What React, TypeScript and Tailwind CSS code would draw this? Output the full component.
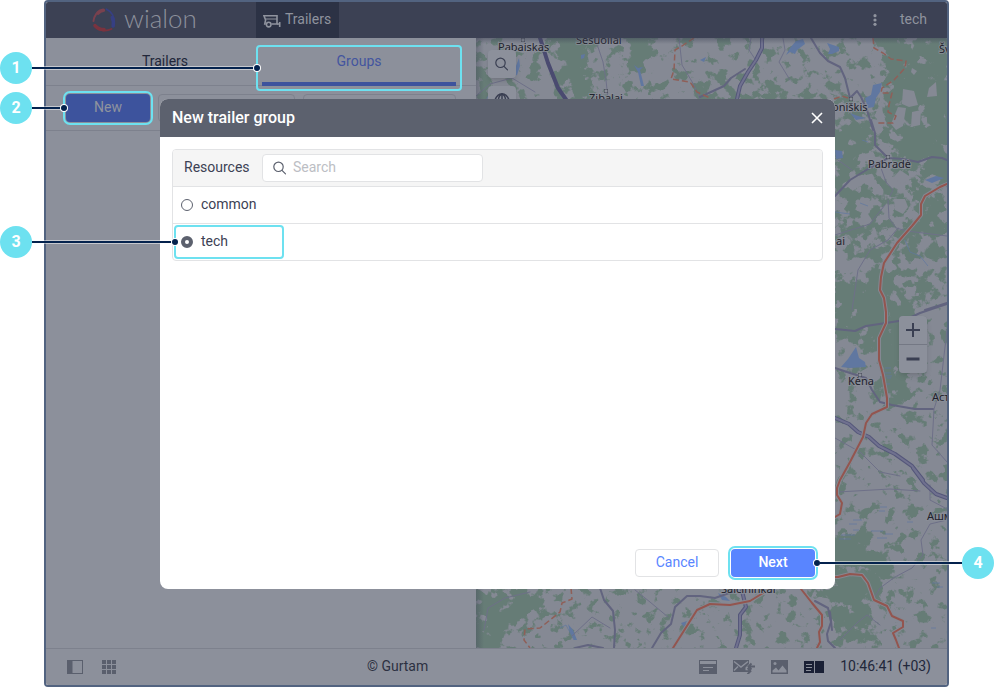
import React from "react";

const towns = [
  { name: "Pabaiskas", x: 498, y: 51, dot: [523, 40] },
  { name: "Šešuoliai", x: 576, y: 44 },
  { name: "Zibalai", x: 589, y: 102, dot: [606, 91] },
  { name: "Šv", x: 939, y: 53 },
  { name: "Joniškis", x: 829, y: 111, dot: [851, 99] },
  { name: "Pabradė", x: 868, y: 168, dot: [888, 157] },
  { name: "ai", x: 836, y: 245 },
  { name: "Kėna", x: 848, y: 385, dot: [860, 375] },
  { name: "Аст", x: 932, y: 401 },
  { name: "Ашм", x: 927, y: 520 },
  { name: "Šalčininkai", x: 721, y: 593 },
];

const lakes = [
  "786,55 790,48 796,41 803,39 805,44 797,50 795,54 790,52",
  "827,43 833,45 839,47 839,51 832,54 828,54 830,49",
  "873,85 882,83 880,92 876,98 874,107 868,108 865,98 871,95",
  "856,347 859,358 865,362 866,367 850,368 841,367 848,359",
  "519,58 520,66 517,75 514,76 516,66",
  "581,55 585,54 584,58 581,59",
  "634,65 638,68 643,67 640,70 644,86 641,86 638,72",
  "835,150 842,151 843,158 836,159",
  "850,113 858,116 866,118 856,120",
  "718,593 726,597 730,601 722,600",
  "568,624 573,630 577,640 574,640 570,632",
  "681,623 687,621 684,627",
  "700,60 706,57 704,62",
  "925,180 936,176 944,178 932,183",
];

const lanes = [
  "M595 38 L603 62 606 80 608 99",
  "M476 96 L490 84 512 78 535 92",
  "M679 38 L682 65 694 85 700 99",
  "M751 38 L749 50 757 62",
  "M783 38 L785 50 779 62 790 80",
  "M881 168 L886 182 893 190 890 196",
  "M888 200 L889 218 896 228 907 231 947 236",
  "M835 235 L870 224 885 205",
  "M898 228 L888 240 870 250 858 270 852 310",
  "M838 160 L852 170",
  "M835 438 L860 452 880 472 900 476",
  "M947 330 L940 390 934 409 932 445 947 462",
  "M838 492 L890 489 920 491",
  "M947 520 L930 524 921 540 923 555 912 568 895 577 880 588 874 598",
  "M484 630 L488 608 505 598 530 592",
  "M572 636 L592 617 610 628",
  "M635 590 L650 602 668 617",
  "M930 485 L930 500 947 509",
  "M840 640 L858 622 867 615 880 625",
];

const roads = [
  "M811 38 L820 53 828 61 840 67 845 78 850 98 M850 98 L857 91 861 97 867 110 873 130",
  "M700 97 L724 86 731 78 745 69",
  "M871 120 L875 133 875 145 888 158 903 159 918 162 932 157 942 158 947 160",
  "M835 196 L850 180 868 169 888 158",
  "M835 329 L855 331 866 326 886 323 905 320 920 313 947 304",
  "M835 368 L850 373 866 378 872 390 880 402 892 405 915 409 933 409",
  "M600 588 L604 600 613 611 615 630 614 648",
  "M652 648 L661 633 671 624 675 607 687 596 700 596 715 598 735 591",
  "M815 601 L828 608 831 622 827 634 828 641 835 648",
  "M575 648 L588 645 603 648",
  "M830 612 L832 630",
  "M925 310 L947 303",
];

const motorways = [
  "M762 38 L762 48 756 60 748 72 740 86 737 99",
  "M835 418 L849 424 858 432 869 437 879 446 895 454 912 466 923 480",
  "M913 468 L924 483 936 494 947 498",
  "M742 591 L746 607 740 615 740 635 736 648",
];

const highways = [
  "M947 184 L940 187 925 196 921 204 921 215 912 226 897 243 884 263 881 277 880 290 884 298 886 312 886 323 879 338 879 360 883 375 887 398 887 407 872 414 866 423 863 437 850 462 840 480 837 488 837 495 842 503 840 514 835 517",
  "M822 577 L838 577 850 574 862 575 868 583 874 600 887 606 892 616 903 621 903 627 893 633 896 640 899 648",
  "M801 589 L812 603 822 615 822 626 819 632 820 642 817 648",
  "M673 648 L697 610 710 604 730 605 750 601 763 593",
];

const borders = [
  "M694 38 L682 46 675 50 674 70 671 79 690 82 697 92 710 98",
  "M873 38 L874 48 883 53 891 59 906 61 905 68 894 80 882 88 881 93 892 93 889 105 888 112 896 116 893 123 878 123",
  "M834 99 L842 96 848 98",
  "M571 588 L572 599 562 603 560 612 550 620 540 628 525 629 524 640 530 648",
];

function MapView() {
  return (
    <svg
      className="absolute inset-0 h-full w-full"
      viewBox="476 38 471 610"
      preserveAspectRatio="xMidYMid slice"
      role="img"
      aria-label="Map"
    >
      <defs>
        <filter id="forest" filterUnits="userSpaceOnUse" x="476" y="38" width="471" height="610" colorInterpolationFilters="sRGB">
          <feGaussianBlur in="SourceGraphic" stdDeviation="4" result="density" />
          <feTurbulence type="fractalNoise" baseFrequency="0.085" numOctaves="4" seed="7" />
          <feColorMatrix values="0 0 0 0 0  0 0 0 0 0  0 0 0 0 0  1 0 0 0 0" result="noise" />
          <feComposite in="density" in2="noise" operator="arithmetic" k2="1" k3="1" k4="-0.5" />
          <feColorMatrix values="0 0 0 0 0.4  0 0 0 0 0.486  0 0 0 0 0.463  0 0 0 12 -4.5" />
        </filter>
        <linearGradient id="edge" x1="0" x2="1" y1="0" y2="0">
          <stop offset="0" stopColor="#3c4154" stopOpacity="0.35" />
          <stop offset="1" stopColor="#3c4154" stopOpacity="0" />
        </linearGradient>
        <linearGradient id="edgeTop" x1="0" x2="0" y1="0" y2="1">
          <stop offset="0" stopColor="#3c4154" stopOpacity="0.45" />
          <stop offset="1" stopColor="#3c4154" stopOpacity="0" />
        </linearGradient>
      </defs>
      <rect x="476" y="38" width="471" height="610" fill="#858994" />
      <g filter="url(#forest)">
        <rect x="440" y="0" width="540" height="690" fillOpacity="0.3" />
        <g fillOpacity="0.45">
          <polygon points="552,30 590,30 588,70 596,105 572,105 560,70" />
          <polygon points="625,30 645,30 652,55 635,75 625,70" />
          <polygon points="880,30 950,30 950,185 900,150 890,120 885,80" />
          <polygon points="835,115 870,115 868,150 850,180 835,190" />
          <polygon points="870,300 910,295 922,320 910,360 915,400 888,405 880,370" />
          <polygon points="835,290 885,270 880,360 868,345 835,325" />
          <polygon points="830,530 870,540 895,570 870,610 872,640 850,640 830,620" />
          <polygon points="476,598 520,588 545,590 540,615 505,625 500,655 476,655" />
          <polygon points="476,50 490,65 485,100 476,100" />
        </g>
        <g fillOpacity="0.17">
          <polygon points="835,190 890,180 947,200 947,300 895,290 860,260 835,260" />
          <polygon points="900,200 947,190 947,240 905,240" />
          <polygon points="690,80 760,75 850,95 850,105 690,105" />
          <polygon points="870,125 947,150 947,200 890,180" />
        </g>
      </g>
      <g fill="#858994">
        <polygon points="903,89 914,91 918,105 909,107 902,104" />
        <polygon points="898,107 906,108 903,126 896,130 891,124" />
        <polygon points="912,112 921,110 920,125 911,127" />
        <polygon points="929,88 936,82 937,96 927,97" />
        <polygon points="912,68 917,71 914,75 911,72" />
        <polygon points="894,199 905,199 908,207 903,214 895,210" />
        <polygon points="900,170 912,178 902,184 893,178" />
      </g>
      <g fill="#6077a0">
        {lakes.map((p) => (
          <polygon key={p} points={p} />
        ))}
      </g>
      <g stroke="#6077a0" strokeWidth="1" fill="none" opacity="0.7">
        <path d="M853 520h9m-13 4h8m-4 6h6m-18 5h14m-16 4h12m20-8h12m2 3h8m-16 4h10m20-16h6M880 507h7m-8 4h6M932 583h8m-3 4h6M931 628h5M885 368h6m-7 5h7m-4 5h4m-7 6h6M884 376h8" />
        <path d="M560 628 L566 625 574 640 M835 212 L850 214 M862 140l6 2 M860 203l8 3 M905 240l5 12 10 4 8 10 M486 100l8-14" />
      </g>
      <g fill="none" strokeLinejoin="round" strokeLinecap="round">
        <g stroke="#6e7088" strokeWidth="1">
          {lanes.map((d) => (
            <path key={d} d={d} />
          ))}
        </g>
        <g stroke="#62647f" strokeWidth="2">
          {roads.map((d) => (
            <path key={d} d={d} />
          ))}
        </g>
        <path d="M540 38 L548 63 558 88 567 101" stroke="#4a4a70" strokeWidth="4" />
        <g stroke="#55577a" strokeWidth="4">
          {motorways.map((d) => (
            <path key={d} d={d} />
          ))}
        </g>
        <g stroke="#70718f" strokeWidth="2">
          {motorways.map((d) => (
            <path key={d} d={d} />
          ))}
        </g>
        <g stroke="#858892" strokeWidth="4">
          {highways.map((d) => (
            <path key={d} d={d} />
          ))}
        </g>
        <g stroke="#93554f" strokeWidth="2">
          {highways.map((d) => (
            <path key={d} d={d} />
          ))}
        </g>
        <g stroke="#8f5f58" strokeWidth="1.5" strokeDasharray="6 3" strokeLinecap="butt">
          {borders.map((d) => (
            <path key={d} d={d} />
          ))}
        </g>
      </g>
      <g
        className="font-['Noto_Sans',sans-serif] text-[11px]"
        fill="#1f222c"
        stroke="#8b8f99"
        strokeWidth="2"
        strokeOpacity="0.8"
        paintOrder="stroke"
      >
        {towns.map((t) => (
          <React.Fragment key={t.name}>
            <text x={t.x} y={t.y}>
              {t.name}
            </text>
            {t.dot && (
              <rect x={t.dot[0] - 1.5} y={t.dot[1] - 1.5} width="3" height="3" fill="#8b8f99" stroke="#2f3342" strokeWidth="1" />
            )}
          </React.Fragment>
        ))}
      </g>
      <rect x="476" y="38" width="8" height="610" fill="url(#edge)" />
      <rect x="476" y="38" width="471" height="6" fill="url(#edgeTop)" />
    </svg>
  );
}

function SearchIcon({ className }: { className: string }) {
  return (
    <svg className={className} viewBox="0 0 14 14" fill="none" stroke="currentColor" strokeWidth="1.2" strokeLinecap="round">
      <circle cx="5.5" cy="5.8" r="4.700" />
      <path d="M9 9.300 L12.500 12.800" />
    </svg>
  );
}

function Callout({ n, className, flip }: { n: number; className: string; flip?: boolean }) {
  return (
    <div className={`pointer-events-none absolute z-30 flex items-center ${flip ? "flex-row-reverse" : ""} ${className}`}>
      <span className="flex size-8 shrink-0 items-center justify-center rounded-full bg-[#6de1f0] text-base font-bold text-white">
        {n}
      </span>
      <span className="h-1 flex-1 border-y border-white/50 bg-[#04224d] bg-clip-padding" />
      <span className="size-1.5 shrink-0 rounded-full bg-[#04224d] ring-1 ring-white" />
    </div>
  );
}

function Logo() {
  return (
    <div className="flex items-center gap-2">
      <svg className="size-6" viewBox="0 0 24 24" fill="none" strokeLinecap="round">
        <path d="M1.500 13 C2 8 5 3 10.500 2.400" stroke="#79414e" strokeWidth="2" />
        <path d="M6 5 C7.500 3.300 9 2.600 11.300 2.300" stroke="#79414e" strokeWidth="3.600" />
        <path d="M14.500 1.200 C19.500 3.500 22.900 9 22.300 16" stroke="#363f83" strokeWidth="1.800" />
        <path d="M20.300 9.500 C21.600 12.500 21.700 15.500 21.200 18" stroke="#363f83" strokeWidth="3.600" />
        <path d="M3 18.400 C7 23 14 23.600 19.500 21" stroke="#79333f" strokeWidth="1.800" />
        <path d="M3 17.600 C5.500 20.400 8.500 21.600 12 21.600" stroke="#79333f" strokeWidth="3.600" />
      </svg>
      <span className="pb-1 font-['Lato',sans-serif] text-[26px] leading-6 font-light text-[#8c909b]">wialon</span>
    </div>
  );
}

function Header() {
  return (
    <header className="flex h-9 items-stretch bg-[#3c4154] text-[#8f939e]">
      <div className="flex w-[210px] items-center pl-[46px]">
        <Logo />
      </div>
      <a href="#trailers" className="flex items-center gap-1 bg-[#2c3245] pr-2 pb-0.5 pl-[7px]">
        <svg className="mt-1 h-4 w-[18px]" viewBox="0 0 18 16" fill="none" stroke="currentColor" strokeWidth="1.600">
          <path d="M2.800 11 H1.800 L2.600 7 L1 2.800 H14 V11 H8.500" />
          <path d="M2.500 6 H14" strokeWidth="1" />
          <path d="M14 11 H17 M16.700 9 V14" />
          <circle cx="5.700" cy="11.600" r="2.300" />
        </svg>
        <span>Trailers</span>
      </a>
      <div className="ml-auto flex items-center pr-5">
        <button type="button" aria-label="More" className="flex h-9 w-6 items-center justify-center">
          <svg className="h-3 w-1" viewBox="0 0 4 12" fill="currentColor">
            <circle cx="2" cy="1.700" r="1.600" />
            <circle cx="2" cy="6" r="1.600" />
            <circle cx="2" cy="10.300" r="1.600" />
          </svg>
        </button>
        <button type="button" className="ml-[13px] pb-0.5">
          tech
        </button>
      </div>
    </header>
  );
}

function SidePanel() {
  return (
    <aside className="w-[430px] shrink-0 bg-[#8c909b]">
      <nav className="flex h-12 border-b border-[#7d818d] pr-5 pl-[22px]">
        <a href="#list" className="flex flex-1 justify-center pt-[13px] leading-5 text-[#22273a]">
          Trailers
        </a>
        <a href="#groups" className="relative flex flex-1 justify-center pt-[13px] leading-5 text-[#43559f]">
          Groups
          <span className="absolute inset-x-0 -bottom-px h-1 bg-[#3d539d]" />
          <span className="absolute inset-x-[-6px] top-[7px] -bottom-1.5 rounded border-2 border-[#6de1f0]" />
        </a>
      </nav>
      <div className="flex gap-2 border-b border-[#7d818d] px-5 py-2">
        <button
          type="button"
          className="h-7 w-[84px] rounded bg-[#3d539d] pb-0.5 text-[#8f939e] outline-2 outline-offset-1 outline-[#6de1f0]"
        >
          New
        </button>
        <input aria-label="Filter" className="h-7 w-[137px] rounded border border-[#7d818d]" />
        <input aria-label="Name" className="h-7 min-w-0 flex-1 rounded border border-[#7d818d]" />
      </div>
    </aside>
  );
}

const mapButton = "flex size-7 items-center justify-center bg-[#8c909b] text-[#3a3f52]";

function MapArea() {
  return (
    <main className="relative min-w-0 flex-1 overflow-hidden">
      <MapView />
      <div className="absolute top-3 left-3 flex flex-col gap-2">
        <button type="button" aria-label="Search on map" className={`${mapButton} rounded shadow-md`}>
          <SearchIcon className="size-3.5" />
        </button>
        <button type="button" aria-label="Layers" className={`${mapButton} rounded shadow-md`}>
          <svg className="size-4" viewBox="0 0 16 16" fill="none" stroke="currentColor" strokeWidth="1.500">
            <path d="M1 8 C4 -0.500 12 -0.500 15 8" />
            <path d="M4.500 7 C5.500 1 10.500 1 11.500 7" />
            <path d="M8 1.500v6M1 8h14" />
            <path d="M1 8 C4 16 12 16 15 8" />
          </svg>
        </button>
      </div>
      <div className="absolute top-[278px] right-5 flex flex-col gap-px overflow-hidden rounded bg-[#747884] shadow-md">
        <button type="button" aria-label="Zoom in" className={mapButton}>
          <svg className="size-3.5" viewBox="0 0 14 14" stroke="currentColor" strokeWidth="2">
            <path d="M7 0v14M0 7h14" />
          </svg>
        </button>
        <button type="button" aria-label="Zoom out" className={mapButton}>
          <svg className="size-3.5" viewBox="0 0 14 14" stroke="currentColor" strokeWidth="3">
            <path d="M0.500 7h13" />
          </svg>
        </button>
      </div>
    </main>
  );
}

function Footer() {
  return (
    <footer className="flex h-[37px] items-center border-t border-[#7d818d] bg-[#8c909b] pr-4 pl-[21px] text-[#5a5f6d]">
      <div className="flex items-center gap-[19px]">
        <button type="button" aria-label="Toggle panel">
          <svg className="h-3.5 w-4" viewBox="0 0 16 14" fill="currentColor">
            <path d="M0 0h16v14H0z M5.500 1v12H15V1z" fillRule="evenodd" />
          </svg>
        </button>
        <button type="button" aria-label="Applications">
          <svg className="size-3.5" viewBox="0 0 14 14" fill="currentColor">
            <path d="M0 0h4v4H0zM5 0h4v4H5zM10 0h4v4h-4zM0 5h4v4H0zM5 5h4v4H5zM10 5h4v4h-4zM0 10h4v4H0zM5 10h4v4H5zM10 10h4v4h-4z" />
          </svg>
        </button>
      </div>
      <p className="flex-1 pr-5 pb-0.5 text-center text-[#2c3142]">© Gurtam</p>
      <div className="flex items-center gap-4">
        <button type="button" aria-label="Events">
          <svg className="h-3.5 w-[18px]" viewBox="0 0 18 14" fill="none">
            <path d="M0 0h18v14H0z M1 1v3h16V1z" fill="currentColor" fillRule="evenodd" />
            <path d="M4 7.500h10M4 10.500h6" stroke="#8c909b" strokeWidth="1.200" />
          </svg>
        </button>
        <button type="button" aria-label="Messages">
          <svg className="h-3.5 w-[22px]" viewBox="0 0 22 14" fill="none">
            <path d="M0 0h16v4l-3.500 3.500V12H0z" fill="currentColor" />
            <path d="M1 1.500l7 5.500 7-5.500M1 10.500l4-4" stroke="#8c909b" strokeWidth="1.400" />
            <path d="M22 6.500h-6.500m3-3L15.500 6.500l3 3M11 11.200h6.500m-3-3l3 3-3 3" stroke="currentColor" strokeWidth="1.800" />
          </svg>
        </button>
        <button type="button" aria-label="Images">
          <svg className="h-3.5 w-[17px]" viewBox="0 0 17 14" fill="none">
            <path d="M0 0h17v14H0z" fill="currentColor" />
            <path d="M1.500 12.500v-2l3.500-3 2.500 3 4-5 4 5v2z" fill="#8c909b" />
            <circle cx="4" cy="3.500" r="1.500" fill="#8c909b" />
          </svg>
        </button>
        <button type="button" aria-label="Layout" className="text-[#1a2035]">
          <svg className="h-3 w-5" viewBox="0 0 20 12" fill="none">
            <path d="M0 0h10v12H0zM11 0h9v12h-9z" fill="currentColor" />
            <path d="M2 3.500h6M2 6.500h6M2 9.500h5" stroke="#8c909b" />
          </svg>
        </button>
        <time className="pb-0.5 text-[#22273a]">10:46:41 (+03)</time>
      </div>
    </footer>
  );
}

function ResourceRow({ name, checked }: { name: string; checked?: boolean }) {
  return (
    <div className="relative border-t border-[#e2e3e5]">
      <label className="flex h-9 items-center gap-2 pb-0.5 pl-2 text-[#3c4154]">
        <input
          type="radio"
          name="resource"
          defaultChecked={checked}
          className="mt-0.5 size-3 appearance-none rounded-full border border-[#5c616e] bg-white checked:border-4"
        />
        {name}
      </label>
      {checked && <span className="pointer-events-none absolute inset-y-px left-px w-[110px] rounded border-2 border-[#6de1f0]" />}
    </div>
  );
}

function Dialog() {
  return (
    <div className="absolute inset-0 z-20 flex items-center justify-center pt-px pl-px">
      <section
        role="dialog"
        aria-labelledby="dialog-title"
        className="flex h-[490px] w-[675px] flex-col overflow-hidden rounded-lg bg-white"
      >
        <div className="flex h-[38px] shrink-0 items-center justify-between bg-[#5c616e] px-3 text-white">
          <h1 id="dialog-title" className="text-base font-medium">
            New trailer group
          </h1>
          <button type="button" aria-label="Close">
            <svg className="size-3" viewBox="0 0 12 12" stroke="currentColor" strokeWidth="1.600">
              <path d="M1 1l10 10M11 1L1 11" />
            </svg>
          </button>
        </div>
        <div className="flex-1 p-3">
          <div className="overflow-hidden rounded border border-[#e2e3e5]">
            <div className="flex h-9 items-center bg-[#f5f5f5] pl-[11px] text-[#3c4154]">
              <label htmlFor="resource-search" className="w-[78px] pb-0.5">
                Resources
              </label>
              <div className="relative">
                <input
                  id="resource-search"
                  placeholder="Search"
                  className="block h-7 w-[221px] rounded border border-[#e2e3e5] bg-white pb-0.5 pl-[30px] placeholder:text-[#bcbec4]"
                />
                <SearchIcon className="absolute top-[7px] left-[11px] size-3.5 text-[#5c616e]" />
              </div>
            </div>
            <ResourceRow name="common" />
            <ResourceRow name="tech" checked />
          </div>
        </div>
        <div className="flex justify-end gap-3 px-5 pb-3">
          <button type="button" className="h-7 w-[84px] rounded border border-[#e2e3e5] pb-0.5 text-[#5985ff]">
            Cancel
          </button>
          <button
            type="button"
            className="h-7 w-[84px] rounded bg-[#5985ff] pb-0.5 font-medium text-white outline-2 outline-offset-1 outline-[#6de1f0]"
          >
            Next
          </button>
        </div>
      </section>
    </div>
  );
}

export default function App() {
  return (
    <div className="relative flex min-h-screen bg-white pr-[45px] pl-11 font-['Roboto',sans-serif] text-sm">
      <div className="flex min-w-0 flex-1 flex-col overflow-hidden rounded border-2 border-[#526380]">
        <Header />
        <div className="flex flex-1">
          <SidePanel />
          <MapArea />
        </div>
        <Footer />
      </div>
      <Dialog />
      <Callout n={1} className="top-[52px] left-0 w-[260px]" />
      <Callout n={2} className="top-[92px] left-0 w-[67px]" />
      <Callout n={3} className="top-[226px] left-0 w-[178px]" />
      <Callout n={4} flip className="top-[547px] right-0 w-[180px]" />
    </div>
  );
}
